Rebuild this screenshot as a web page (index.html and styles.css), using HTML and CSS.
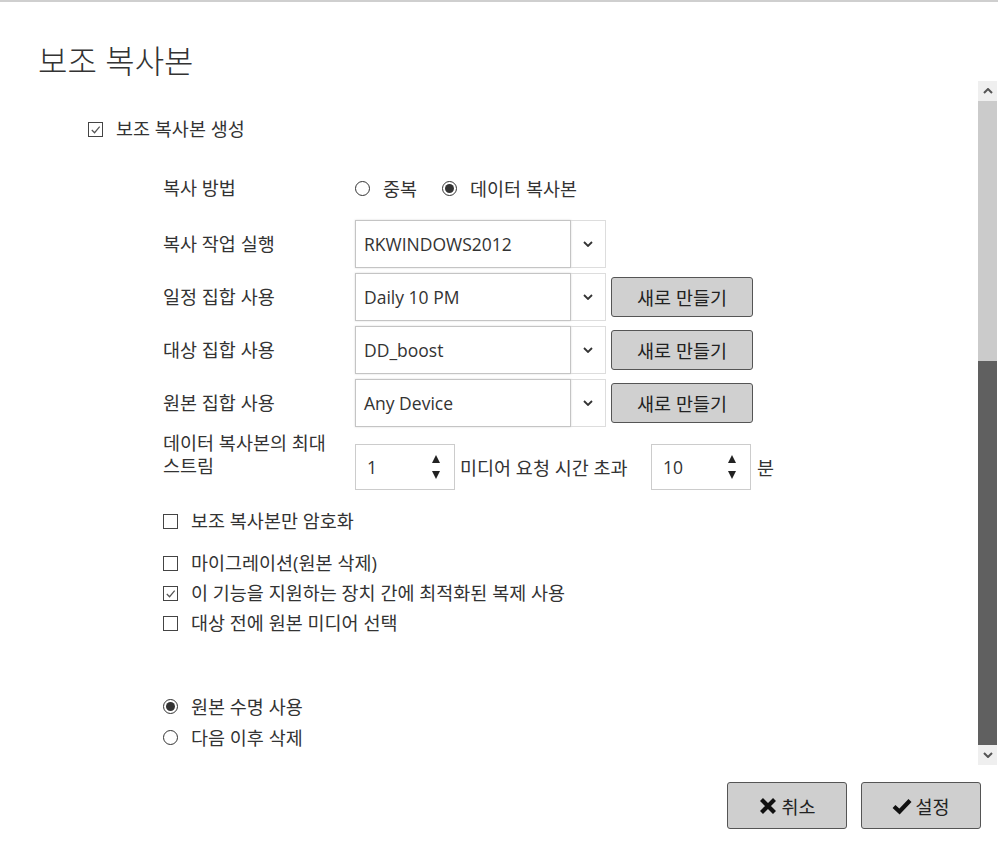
FILE: index.html
```html
<!DOCTYPE html>
<html lang="ko">
<head>
    <meta charset="UTF-8">
    <meta name="viewport" content="width=device-width, initial-scale=1.0">
    <title>보조 복사본</title>
    <link rel="stylesheet" href="styles.css">
</head>
<body>
    <div class="dialog">
        <h1 class="title">보조 복사본</h1>

        <div class="dialog-body">
            <div class="content">
                <div class="check-row top-check">
                    <span class="box checked"><svg viewBox="0 0 14 14"><polyline points="3,7.5 6,10.5 11.5,4"/></svg></span>
                    <span>보조 복사본 생성</span>
                </div>

                <div class="form">
                    <div class="form-row radio-row">
                        <div class="label">복사 방법</div>
                        <div class="controls">
                            <span class="radio"></span><span class="opt">중복</span>
                            <span class="radio on"></span><span>데이터 복사본</span>
                        </div>
                    </div>

                    <div class="form-row select-row">
                        <div class="label">복사 작업 실행</div>
                        <div class="controls">
                            <div class="select">
                                <div class="select-value">RKWINDOWS2012</div>
                                <div class="select-arrow"><svg viewBox="0 0 10 6"><polyline points="1,1 5,5 9,1"/></svg></div>
                            </div>
                        </div>
                    </div>

                    <div class="form-row select-row">
                        <div class="label">일정 집합 사용</div>
                        <div class="controls">
                            <div class="select">
                                <div class="select-value">Daily 10 PM</div>
                                <div class="select-arrow"><svg viewBox="0 0 10 6"><polyline points="1,1 5,5 9,1"/></svg></div>
                            </div>
                            <button class="btn-new">새로 만들기</button>
                        </div>
                    </div>

                    <div class="form-row select-row">
                        <div class="label">대상 집합 사용</div>
                        <div class="controls">
                            <div class="select">
                                <div class="select-value">DD_boost</div>
                                <div class="select-arrow"><svg viewBox="0 0 10 6"><polyline points="1,1 5,5 9,1"/></svg></div>
                            </div>
                            <button class="btn-new">새로 만들기</button>
                        </div>
                    </div>

                    <div class="form-row select-row">
                        <div class="label">원본 집합 사용</div>
                        <div class="controls">
                            <div class="select">
                                <div class="select-value">Any Device</div>
                                <div class="select-arrow"><svg viewBox="0 0 10 6"><polyline points="1,1 5,5 9,1"/></svg></div>
                            </div>
                            <button class="btn-new">새로 만들기</button>
                        </div>
                    </div>

                    <div class="form-row spin-row">
                        <div class="label wrap">데이터 복사본의 최대 스트림</div>
                        <div class="controls">
                            <div class="spin">
                                <span class="spin-value">1</span>
                                <span class="spin-arrows">
                                    <svg viewBox="0 0 8 8"><polygon points="4,0 8,8 0,8"/></svg>
                                    <svg viewBox="0 0 8 8"><polygon points="0,0 8,0 4,8"/></svg>
                                </span>
                            </div>
                            <span class="spin-text">미디어 요청 시간 초과</span>
                            <div class="spin">
                                <span class="spin-value">10</span>
                                <span class="spin-arrows">
                                    <svg viewBox="0 0 8 8"><polygon points="4,0 8,8 0,8"/></svg>
                                    <svg viewBox="0 0 8 8"><polygon points="0,0 8,0 4,8"/></svg>
                                </span>
                            </div>
                            <span class="unit">분</span>
                        </div>
                    </div>

                    <div class="check-row encrypt">
                        <span class="box"></span>
                        <span>보조 복사본만 암호화</span>
                    </div>

                    <div class="check-list">
                        <div class="check-row">
                            <span class="box"></span>
                            <span>마이그레이션(원본 삭제)</span>
                        </div>
                        <div class="check-row">
                            <span class="box checked"><svg viewBox="0 0 14 14"><polyline points="3,7.5 6,10.5 11.5,4"/></svg></span>
                            <span>이 기능을 지원하는 장치 간에 최적화된 복제 사용</span>
                        </div>
                        <div class="check-row">
                            <span class="box"></span>
                            <span>대상 전에 원본 미디어 선택</span>
                        </div>
                    </div>

                    <div class="radio-list">
                        <div class="radio-item">
                            <span class="radio on"></span><span>원본 수명 사용</span>
                        </div>
                        <div class="radio-item">
                            <span class="radio"></span><span>다음 이후 삭제</span>
                        </div>
                    </div>
                </div>
            </div>

            <div class="scrollbar">
                <div class="sb-btn"><svg viewBox="0 0 10 6"><polyline points="1,5 5,1 9,5"/></svg></div>
                <div class="sb-track"></div>
                <div class="sb-thumb"></div>
                <div class="sb-btn"><svg viewBox="0 0 10 6"><polyline points="1,1 5,5 9,1"/></svg></div>
            </div>
        </div>

        <div class="footer">
            <button class="btn-foot">
                <svg class="ico" viewBox="0 0 20 20"><path d="M3.5 3.5 L16.5 16.5 M16.5 3.5 L3.5 16.5"/></svg>취소
            </button>
            <button class="btn-foot">
                <svg class="ico" viewBox="0 0 20 20"><polyline points="2,10.5 7.5,15.5 18,4.5"/></svg>설정
            </button>
        </div>
    </div>
</body>
</html>
```

FILE: styles.css
```css
*{
    margin: 0;
    padding: 0;
    box-sizing: border-box;
}
body{
    font-family: "Open Sans", "Noto Sans CJK KR", sans-serif;
    font-size: 18.5px;
    color: #333;
    background: #fff;
}
.dialog{
    border-top: 2px solid #cfcfcf;
    width: 998px;
    height: 843px;
}

.title{
    font-weight: 300;
    font-size: 32px;
    line-height: 40px;
    padding: 39px 0 0 38px;
    height: 79px;
    color: #333;
}

.dialog-body{
    display: flex;
    height: 684px;
}
.content{
    flex: 1;
    overflow: hidden;
}

/* checkbox + radio */
.check-row{
    display: flex;
    align-items: center;
    gap: 13px;
    line-height: 24px;
}
.box{
    width: 15px;
    height: 15px;
    border: 1px solid #444;
    display: flex;
    flex-shrink: 0;
}
.box svg{
    width: 13px;
    height: 13px;
    fill: none;
    stroke: #555;
    stroke-width: 1.3;
}
.top-check{
    margin: 36px 0 0 88px;
}

.radio{
    width: 15px;
    height: 15px;
    border: 1px solid #333;
    border-radius: 50%;
    display: inline-flex;
    align-items: center;
    justify-content: center;
    flex-shrink: 0;
}
.radio.on::after{
    content: "";
    width: 9px;
    height: 9px;
    border-radius: 50%;
    background: #333;
}

.form{
    padding-left: 163px;
    margin-top: 34px;
}
.form-row{
    display: grid;
    grid-template-columns: 192px 1fr;
    align-items: center;
}
.label{
    line-height: 24px;
}
.controls{
    display: flex;
    align-items: center;
}

.radio-row{
    height: 24px;
    margin-bottom: 21px;
}
.radio-row .controls span + span{
    margin-left: 13px;
}
.radio-row .opt{
    margin-right: 12px;
}

.select-row{
    height: 48px;
    margin-bottom: 5px;
}
.select{
    display: flex;
    width: 251px;
    height: 48px;
}
.select-value{
    width: 216px;
    border: 1px solid #c4c4c4;
    box-shadow: 0 0 2px rgba(0,0,0,0.15);
    padding-left: 8px;
    line-height: 46px;
    font-size: 17.5px;
    color: #333;
}
.select-arrow{
    flex: 1;
    border: 1px solid #ddd;
    border-left: none;
    display: flex;
    align-items: center;
    justify-content: center;
}
.select-arrow svg{
    width: 10px;
    height: 6px;
    fill: none;
    stroke: #333;
    stroke-width: 1.8;
}
.btn-new{
    margin-left: 5px;
    width: 142px;
    height: 40px;
    background: #d0d0d0;
    border: 1px solid #555;
    border-radius: 3px;
    font: inherit;
    color: #222;
}

.spin-row{
    align-items: start;
    margin-top: -1px;
}
.label.wrap{
    line-height: 23px;
    width: 180px;
}
.spin-row .controls{
    margin-top: 13px;
}
.spin{
    width: 100px;
    height: 46px;
    border: 1px solid #ccc;
    display: flex;
    align-items: center;
    padding-left: 11px;
}
.spin-value{
    flex: 1;
    font-size: 17.5px;
}
.spin-arrows{
    display: flex;
    flex-direction: column;
    gap: 8px;
    margin-right: 14px;
}
.spin-arrows svg{
    width: 8px;
    height: 8px;
    fill: #222;
    display: block;
}
.spin-text{
    width: 196px;
    padding-left: 5px;
}
.unit{
    margin-left: 6px;
}

.encrypt{
    margin-top: 19px;
}
.check-list{
    margin-top: 15px;
}
.check-list .check-row{
    line-height: 30px;
}
.radio-list{
    margin-top: 53px;
}
.radio-item{
    display: flex;
    align-items: center;
    gap: 13px;
    line-height: 31px;
}

/* scrollbar */
.scrollbar{
    width: 19px;
    margin-right: 1px;
    display: flex;
    flex-direction: column;
}
.sb-btn{
    height: 20px;
    background: #efefef;
    display: flex;
    align-items: center;
    justify-content: center;
}
.sb-btn svg{
    width: 10px;
    height: 6px;
    fill: none;
    stroke: #555;
    stroke-width: 2;
}
.sb-track{
    height: 260px;
    background: #cbcbcb;
}
.sb-thumb{
    flex: 1;
    background: #606060;
}

.footer{
    display: flex;
    justify-content: flex-end;
    gap: 14px;
    padding: 17px 17px 0 0;
}
.btn-foot{
    width: 120px;
    height: 47px;
    background: #cfcfcf;
    border: 1px solid #555;
    border-radius: 3px;
    font: inherit;
    color: #222;
    display: flex;
    align-items: center;
    justify-content: center;
    gap: 3px;
}
.ico{
    width: 20px;
    height: 20px;
    fill: none;
    stroke: #111;
    stroke-width: 4.2;
}
```
